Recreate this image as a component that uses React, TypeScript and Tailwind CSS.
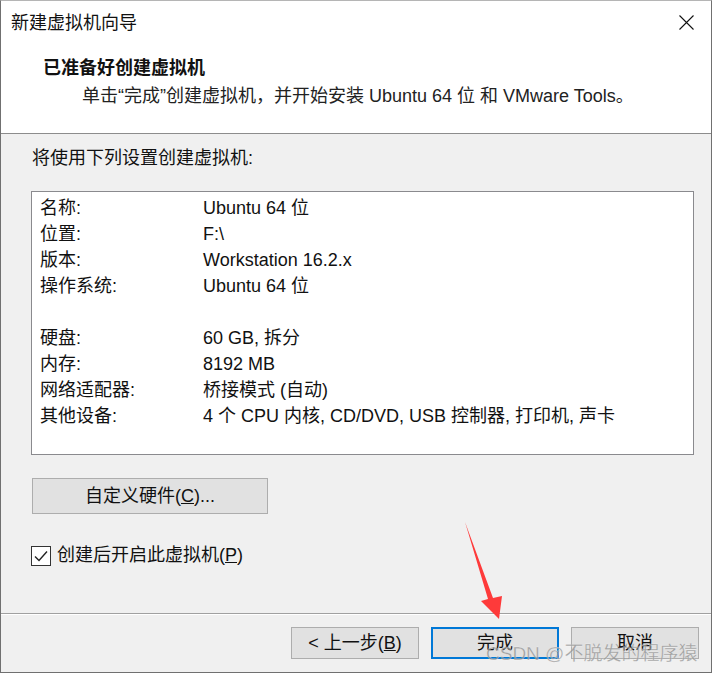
import React from 'react'

const font = { fontFamily: '"Liberation Sans", "Noto Sans CJK SC", sans-serif' }

const rows: [string, string][] = [
  ['名称:', 'Ubuntu 64 位'],
  ['位置:', 'F:\\'],
  ['版本:', 'Workstation 16.2.x'],
  ['操作系统:', 'Ubuntu 64 位'],
  ['', ''],
  ['硬盘:', '60 GB, 拆分'],
  ['内存:', '8192 MB'],
  ['网络适配器:', '桥接模式 (自动)'],
  ['其他设备:', '4 个 CPU 内核, CD/DVD, USB 控制器, 打印机, 声卡'],
]

function WinButton({ children, primary }: { children: React.ReactNode; primary?: boolean }) {
  return (
    <div
      className={
        'flex items-center justify-center h-[32px] w-[128px] bg-[#e1e1e1] text-[18px] text-[#111] ' +
        (primary ? 'border-2 border-[#0078d7]' : 'border border-[#adadad]')
      }
    >
      {children}
    </div>
  )
}

export default function App() {
  return (
    <div
      className="relative w-[712px] h-[673px] flex flex-col border-x border-b border-[#707070] border-t border-t-[#b5b5b5] bg-[#f0f0f0] text-[18px] text-[#111] overflow-hidden"
      style={font}
    >
      {/* Header */}
      <div className="h-[133px] shrink-0 bg-white border-b border-[#8c8c8c] flex flex-col">
        <div className="h-[43px] flex items-center justify-between pl-[10px] pr-[17px]">
          <span className="leading-none">新建虚拟机向导</span>
          <svg width="15" height="15" viewBox="0 0 15 15">
            <path d="M0.5 0.5 L14.5 14.5 M14.5 0.5 L0.5 14.5" stroke="#111" strokeWidth="1.1" />
          </svg>
        </div>
        <div className="pl-[42px] mt-[11px] leading-[26px] font-bold">已准备好创建虚拟机</div>
        <div className="pl-[81px] mt-[2px] leading-[26px] text-[#222]">
          单击“完成”创建虚拟机，并开始安装 Ubuntu 64 位 和 VMware Tools。
        </div>
      </div>

      {/* Body */}
      <div className="flex-1 flex flex-col pl-[30px]">
        <div className="mt-[11px] leading-[26px] pl-[1px]">将使用下列设置创建虚拟机:</div>
        <div className="mt-[20px] w-[663px] h-[264px] bg-white border border-[#8a8a8e] pt-[3px] pl-[8px]">
          {rows.map(([k, v], i) => (
            <div key={i} className="flex h-[26px] items-center">
              <span className="w-[163px] shrink-0">{k}</span>
              <span>{v}</span>
            </div>
          ))}
        </div>
        <div className="mt-[23px] ml-[1px] w-[236px] h-[36px] bg-[#e1e1e1] border border-[#adadad] flex items-center justify-center">
          自定义硬件(<u>C</u>)...
        </div>
        <div className="mt-[28px] flex items-center gap-[6px]">
          <div className="w-[20px] h-[20px] border border-[#333] bg-white flex items-center justify-center">
            <svg width="14" height="12" viewBox="0 0 14 12">
              <path d="M1 6.5 L5 10.5 L13 1.5" fill="none" stroke="#222" strokeWidth="1.4" />
            </svg>
          </div>
          <span>创建后开启此虚拟机(<u>P</u>)</span>
        </div>
      </div>

      {/* Footer */}
      <div className="h-[59px] shrink-0 border-t border-[#a0a0a0] flex flex-col">
        <div className="h-px bg-white" />
        <div className="flex justify-end gap-[12px] pr-[12px] pt-[12px]">
          <WinButton>&lt; 上一步(<u>B</u>)</WinButton>
          <WinButton primary>完成</WinButton>
          <WinButton>取消</WinButton>
        </div>
      </div>

      {/* Annotation arrow */}
      <svg className="absolute inset-0 pointer-events-none" width="712" height="673" viewBox="0 0 712 673">
        <polygon
          points="464,521 492,597 501,595 498,618 480,600 487,598"
          fill="#fe3a3a"
        />
      </svg>

      {/* Watermark */}
      <div
        className="absolute left-[485px] top-[641px] text-[19px] leading-[24px] text-[#8e8e8e]/75 pointer-events-none whitespace-nowrap"
        style={{ ...font, WebkitTextStroke: '0.3px rgba(255,255,255,0.6)' }}
      >
        CSDN @不脱发的程序猿
      </div>
    </div>
  )
}
